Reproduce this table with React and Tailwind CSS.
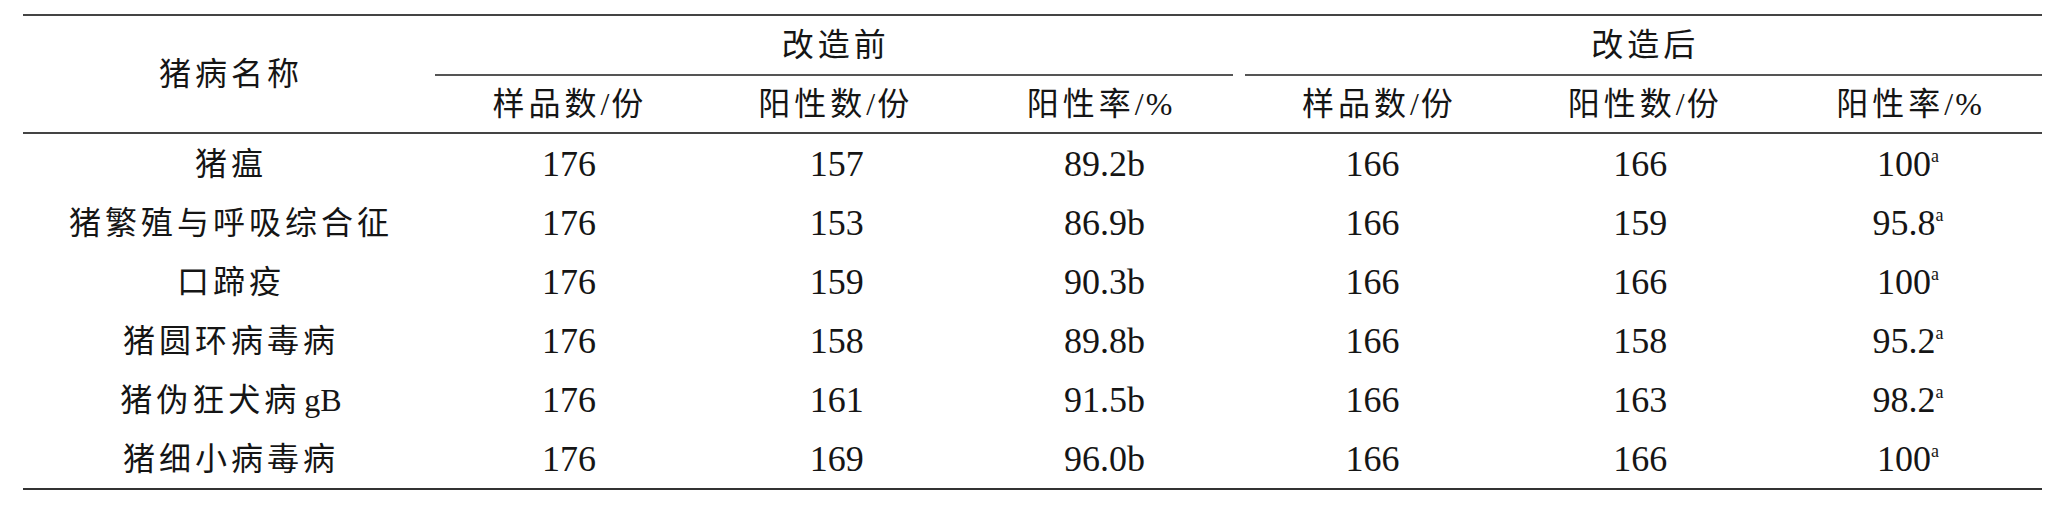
import React from 'react';

const rows = [
  { name: '猪瘟', before: ['176', '157', '89.2b'], after: ['166', '166', '100'] },
  { name: '猪繁殖与呼吸综合征', before: ['176', '153', '86.9b'], after: ['166', '159', '95.8'] },
  { name: '口蹄疫', before: ['176', '159', '90.3b'], after: ['166', '166', '100'] },
  { name: '猪圆环病毒病', before: ['176', '158', '89.8b'], after: ['166', '158', '95.2'] },
  { name: '猪伪狂犬病', tail: 'gB', before: ['176', '161', '91.5b'], after: ['166', '163', '98.2'] },
  { name: '猪细小病毒病', before: ['176', '169', '96.0b'], after: ['166', '166', '100'] },
];

const subHeads = [
  ['样品数', '份'],
  ['阳性数', '份'],
  ['阳性率', '%'],
];

const font = 'font-["Liberation_Serif","Noto_Sans_CJK_SC",serif]';
const cjk = 'flex items-center justify-center text-[32px] leading-none';

function NumCell({ children, sup }) {
  return (
    <div className="flex items-center justify-center text-[36px] leading-none">
      <span>
        {children}
        {sup && <span className="relative -top-[14px] text-[18px]">{sup}</span>}
      </span>
    </div>
  );
}

function Group({ title }) {
  return (
    <div className="flex flex-col">
      <div className={`h-[58px] pl-[4px] tracking-[4px] ${cjk}`}>{title}</div>
      <div className="h-[2px] bg-[#555]" />
      <div className="h-[56px] grid grid-cols-3">
        {subHeads.map(([a, b]) => (
          <div key={a} className={cjk}>
            <span className="tracking-[4px]">{a}</span>
            <span>/</span>
            <span className="pl-[2px]">{b}</span>
          </div>
        ))}
      </div>
    </div>
  );
}

export default function App() {
  return (
    <div className={`w-[2063px] h-[508px] bg-white pt-[14px] pl-[23px] text-[#151515] ${font}`}>
      <div className="w-[2019px]">
        <div className="h-[2px] bg-[#444]" />

        <div className="flex h-[116px]">
          <div className={`w-[412px] pl-[4px] tracking-[4px] ${cjk}`}>猪病名称</div>
          <div className="flex-1 grid grid-cols-2 gap-x-[12px]">
            <Group title="改造前" />
            <Group title="改造后" />
          </div>
        </div>

        <div className="h-[2px] bg-[#444]" />

        {rows.map((r) => (
          <div key={r.name} className="h-[59px] grid grid-cols-[412px_repeat(6,1fr)]">
            <div className={`pl-[4px] ${cjk}`}>
              <span className="tracking-[4px]">{r.name}</span>
              {r.tail && <span className="pl-[4px]">{r.tail}</span>}
            </div>
            {r.before.map((v, i) => (
              <NumCell key={'b' + i}>{v}</NumCell>
            ))}
            {r.after.map((v, i) => (
              <NumCell key={'a' + i} sup={i === 2 ? 'a' : null}>
                {v}
              </NumCell>
            ))}
          </div>
        ))}

        <div className="h-[2px] bg-[#333]" />
      </div>
    </div>
  );
}
